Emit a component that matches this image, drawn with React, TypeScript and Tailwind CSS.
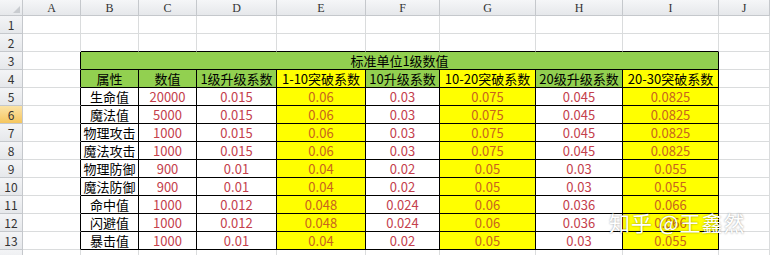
import React from "react";

const cols = ["A", "B", "C", "D", "E", "F", "G", "H", "I", "J"];

// which table columns (B..I) are yellow
const yellow = [false, false, false, true, false, true, false, true];

const headers = ["属性", "数值", "1级升级系数", "1-10突破系数", "10升级系数", "10-20突破系数", "20级升级系数", "20-30突破系数"];

const rows: string[][] = [
  ["生命值", "20000", "0.015", "0.06", "0.03", "0.075", "0.045", "0.0825"],
  ["魔法值", "5000", "0.015", "0.06", "0.03", "0.075", "0.045", "0.0825"],
  ["物理攻击", "1000", "0.015", "0.06", "0.03", "0.075", "0.045", "0.0825"],
  ["魔法攻击", "1000", "0.015", "0.06", "0.03", "0.075", "0.045", "0.0825"],
  ["物理防御", "900", "0.01", "0.04", "0.02", "0.05", "0.03", "0.055"],
  ["魔法防御", "900", "0.01", "0.04", "0.02", "0.05", "0.03", "0.055"],
  ["命中值", "1000", "0.012", "0.048", "0.024", "0.06", "0.036", "0.066"],
  ["闪避值", "1000", "0.012", "0.048", "0.024", "0.06", "0.036", "0.066"],
  ["暴击值", "1000", "0.01", "0.04", "0.02", "0.05", "0.03", "0.055"],
];

function RowHead({ n, active }: { n: number; active?: boolean }) {
  return (
    <div
      className={`h-[18px] flex items-center justify-center border-r border-b border-[#c5c8cc] text-[12px] text-[#333] ${
        active ? "bg-gradient-to-b from-[#fbe3a6] to-[#f5c65e]" : "bg-gradient-to-b from-[#f3f4f6] to-[#e6e8eb]"
      }`}
    >
      {n}
    </div>
  );
}

function Empty({ right, bottom }: { right?: boolean; bottom?: boolean }) {
  return (
    <div
      className={`h-[18px] border-r border-b ${right ? "border-r-black" : "border-r-[#dadcdd]"} ${
        bottom ? "border-b-black" : "border-b-[#dadcdd]"
      }`}
    />
  );
}

export default function App() {
  const font = { fontFamily: '"Noto Sans CJK SC", "Noto Sans", sans-serif' };
  return (
    <div className="relative w-[770px] h-[255px] overflow-hidden bg-white" style={font}>
      <div className="grid grid-cols-[23px_58px_58px_58px_80px_89px_74px_96px_87px_96px_1fr] leading-none">
        {/* column header row */}
        <div className="h-[16px] relative border-r border-b border-[#c5c8cc] bg-gradient-to-b from-[#f5f6f8] to-[#e6e8eb]">
          <div className="absolute right-[2px] bottom-[2px] w-0 h-0 border-l-[7px] border-l-transparent border-b-[7px] border-b-[#c9ccd0]" />
        </div>
        {cols.map((c) => (
          <div
            key={c}
            className="h-[16px] flex items-center justify-center border-r border-b border-[#c5c8cc] bg-gradient-to-b from-[#f5f6f8] to-[#e6e8eb] text-[12px] text-[#333]"
            style={{ fontFamily: '"Liberation Serif", serif' }}
          >
            {c}
          </div>
        ))}

        {/* rows 1-2 */}
        {[1, 2].map((r) => (
          <React.Fragment key={r}>
            <RowHead n={r} />
            {cols.map((c, i) => (
              <Empty key={c} bottom={r === 2 && i >= 1 && i <= 8} />
            ))}
          </React.Fragment>
        ))}

        {/* row 3: merged title */}
        <RowHead n={3} />
        <Empty right />
        <div className="col-span-8 h-[18px] flex items-center justify-center bg-[#92d050] border-r border-b border-black text-[13px] text-black">
          标准单位1级数值
        </div>
        <Empty />

        {/* row 4: headers */}
        <RowHead n={4} />
        <Empty right />
        {headers.map((h, i) => (
          <div
            key={h}
            className={`h-[18px] flex items-center justify-center border-r border-b border-black text-[13px] text-black whitespace-nowrap ${
              yellow[i] ? "bg-[#ffff00]" : "bg-[#92d050]"
            }`}
          >
            {h}
          </div>
        ))}
        <Empty />

        {/* data rows */}
        {rows.map((row, ri) => (
          <React.Fragment key={ri}>
            <RowHead n={ri + 5} active={ri === 1} />
            <Empty right />
            {row.map((v, i) => (
              <div
                key={i}
                className={`h-[18px] flex items-center justify-center border-r border-b border-black text-[13px] ${
                  i === 0 ? "text-black bg-white" : yellow[i] ? "bg-[#ffff00] text-[#c8641e]" : "bg-white text-[#c4404c]"
                }`}
              >
                {v}
              </div>
            ))}
            <Empty />
          </React.Fragment>
        ))}

        {/* row 14 */}
        <div className="h-[18px] border-r border-b border-[#c5c8cc] bg-gradient-to-b from-[#f3f4f6] to-[#e6e8eb]" />
        {cols.map((c) => (
          <Empty key={c} />
        ))}
      </div>

      {/* watermark */}
      <div className="absolute left-[609px] top-[207px] text-[21px] text-white whitespace-nowrap tracking-[1px] [text-shadow:0_0_2px_rgba(0,0,0,0.45)]">
        知乎 @王鑫然
      </div>
    </div>
  );
}
